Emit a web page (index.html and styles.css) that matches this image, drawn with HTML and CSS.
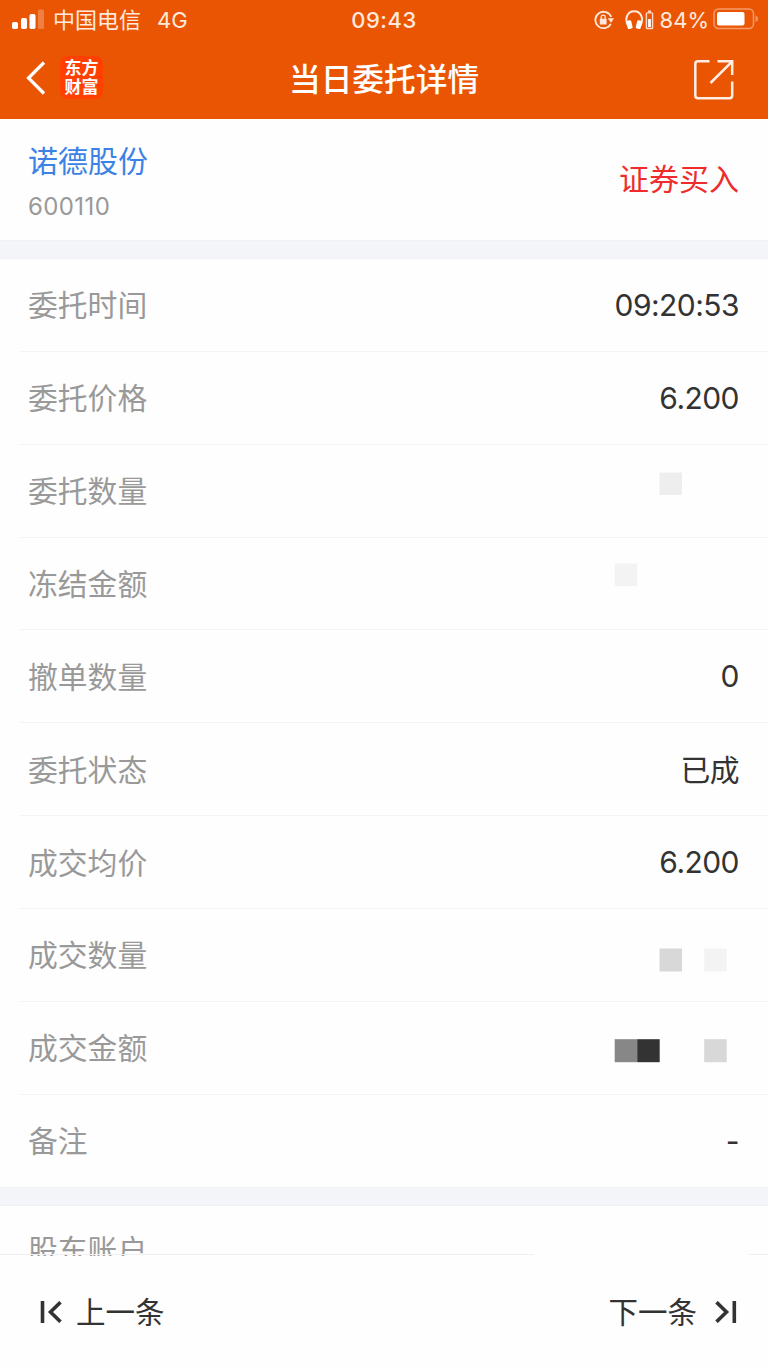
FILE: index.html
```html
<!DOCTYPE html>
<html lang="zh-CN">
<head>
<meta charset="utf-8">
<title>当日委托详情</title>
<link rel="stylesheet" href="styles.css">
</head>
<body>
<div class="screen">
  <header class="header">
    <div class="status">
      <div class="status-left">
        <svg class="signal" width="32" height="22" viewBox="0 0 32 22" fill="#fff"><rect x="0" y="14" width="6" height="7" rx="1.8"/><rect x="9" y="10" width="6" height="11" rx="1.8"/><rect x="17.500" y="6" width="6" height="15" rx="1.800"/><rect x="26" y="1.500" width="6" height="19.500" rx="1.500" opacity=".25"/></svg>
        <span class="carrier">中国电信</span>
        <span class="network">4G</span>
      </div>
      <span class="clock">09:43</span>
      <div class="status-right">
        <svg class="lock" width="20" height="20" viewBox="0 0 20 20" fill="none" stroke="#ffe9de" stroke-width="1.800"><path d="M16.800 13.800A8.200 8.200 0 1 1 17.200 7"/><path d="M13.800 8.200h6.200l-3 4.500z" fill="#ffe9de" stroke="none"/><rect x="5.800" y="8.800" width="6.800" height="5.700" rx=".6" fill="#ffe9de" stroke="none"/><path d="M7.200 9V7.200a2 2 0 0 1 4 0V9" stroke-width="1.300"/></svg>
        <svg class="phones" width="30" height="20" viewBox="0 0 30 20"><path d="M3.200 16C-1 8.500 2.500 1.200 9.200 1.200S19.400 8.500 15.200 16" fill="none" stroke="#ffe9de" stroke-width="2"/><rect x="2" y="10.500" width="5" height="8.500" rx="1.600" transform="rotate(-14 4.300 14.700)" fill="#fff"/><rect x="11.400" y="10.500" width="5" height="8.500" rx="1.600" transform="rotate(14 14.100 14.700)" fill="#fff"/><path d="M23 .5h3v2h-3z" fill="#ffd9c6"/><rect x="21.400" y="2.900" width="6.200" height="15.600" rx=".8" fill="none" stroke="#ffd9c6" stroke-width="1.400"/><path d="M23.100 9h2.800v8h-2.800z" fill="#fff"/></svg>
        <span class="percent">84%</span>
        <svg class="battery" width="46" height="22" viewBox="0 0 46 22"><rect x="1" y="1" width="39.500" height="19.500" rx="4.500" fill="none" stroke="#f39a6a" stroke-width="1.500"/><rect x="4" y="4" width="27.500" height="13.500" rx="2" fill="#fff"/><path d="M42.500 7.500q2.500 1 2.500 3.300t-2.500 3.300z" fill="#f39a6a"/></svg>
      </div>
    </div>
    <nav class="nav">
      <div class="nav-left">
        <svg class="back" width="20" height="34" viewBox="0 0 20 34" fill="none" stroke="#fff" stroke-width="3.200"><path d="M18 1.500 2.500 17 18 32.500"/></svg>
        <div class="logo">东方<br>财富</div>
      </div>
      <h1 class="title">当日委托详情</h1>
      <svg class="share" width="42" height="42" viewBox="0 0 42 42" fill="none" stroke="#ffeee5" stroke-width="2.500"><path d="M16.500 2.300H5Q2.300 2.300 2.300 5v31.500q0 2.700 2.700 2.700h31.500q2.700 0 2.700-2.700V22.500"/><path d="M24.500 2.300h14.700V16M39.200 2.300 17.500 24"/></svg>
    </nav>
  </header>

  <main class="content">
    <section class="summary">
      <div class="security">
        <div class="stock">诺德股份</div>
        <div class="code">600110</div>
      </div>
      <div class="side">证券买入</div>
    </section>
    <div class="gap"></div>
    <section class="rows">
      <div class="row"><span class="label">委托时间</span><span class="value">09:20:53</span></div>
      <div class="row"><span class="label">委托价格</span><span class="value">6.200</span></div>
      <div class="row"><span class="label">委托数量</span><svg class="mosaic" viewBox="0 0 126 92"><rect x="45.500" y="27.500" width="22.500" height="22.500" fill="#eee"/></svg></div>
      <div class="row"><span class="label">冻结金额</span><svg class="mosaic" viewBox="0 0 126 92"><rect x="0.700" y="25.500" width="22.500" height="22.500" fill="#f3f3f3"/></svg></div>
      <div class="row"><span class="label">撤单数量</span><span class="value">0</span></div>
      <div class="row"><span class="label">委托状态</span><span class="value label">已成</span></div>
      <div class="row"><span class="label">成交均价</span><span class="value">6.200</span></div>
      <div class="row"><span class="label">成交数量</span><svg class="mosaic" viewBox="0 0 126 92"><rect x="45.500" y="39.500" width="22.500" height="23" fill="#d8d8d8"/><rect x="90.200" y="39.500" width="22.500" height="23" fill="#f3f3f3"/></svg></div>
      <div class="row"><span class="label">成交金额</span><svg class="mosaic" viewBox="0 0 126 92"><rect x="0.700" y="37.200" width="22.500" height="23" fill="#878787"/><rect x="23.200" y="37.200" width="22.500" height="23" fill="#333"/><rect x="90.200" y="37.200" width="22.500" height="23" fill="#d8d8d8"/></svg></div>
      <div class="row"><span class="label">备注</span><span class="value">-</span></div>
    </section>
    <div class="gap"></div>
    <section class="rows account">
      <div class="row"><span class="label">股东账户</span></div>
    </section>
  </main>
  <div class="footer-line"><i></i><i></i></div>

  <footer class="footer">
    <div class="pager">
      <svg width="22" height="22" viewBox="0 0 22 22" fill="none" stroke="#333" stroke-width="3.600"><path d="M2.500 0v22M20.500 1.200 10.500 11l10 9.800"/></svg>
      <span class="label">上一条</span>
    </div>
    <div class="pager next">
      <span class="label">下一条</span>
      <svg width="22" height="22" viewBox="0 0 22 22" fill="none" stroke="#333" stroke-width="3.600"><path d="M19.300 0v22M1.500 1.200 11.500 11l-10 9.800"/></svg>
    </div>
  </footer>
</div>
</body>
</html>
```
FILE: styles.css
```css
* { box-sizing: border-box; }
body {
  margin: 0;
  background: #fefefe;
  font-family: Inter, "Noto Sans CJK SC", sans-serif;
}
svg { display: block; flex: none; }
.screen {
  display: flex;
  flex-direction: column;
  width: 768px;
  height: 1367px;
  overflow: hidden;
}
.header {
  flex: none;
  height: 119px;
  background: #ea5504;
  color: #fff;
}
.status, .nav {
  display: grid;
  grid-template-columns: 1fr auto 1fr;
  align-items: center;
}
.status {
  height: 40px;
  padding: 0 12px;
  font-size: 22px;
  line-height: 40px;
  color: #ffe9de;
}
.status-left, .status-right, .nav-left {
  display: flex;
  align-items: center;
}
.signal { margin-bottom: 3px; }
.carrier { margin-left: 9px; }
.network { margin-left: 16px; }
.clock {
  font-weight: 500;
  letter-spacing: .5px;
}
.status-right { justify-content: flex-end; }
.phones { margin-left: 11px; }
.percent { margin-left: 5px; letter-spacing: 0; }
.battery { margin: 0 -3px 2px 4px; }
.nav {
  height: 79px;
  padding: 0 33px 0 26px;
}
.back { margin-bottom: 4px; }
.logo {
  width: 43px;
  height: 43px;
  padding-top: 2px;
  margin: 0 0 4px 14px;
  border-radius: 8px;
  background: #ff4000;
  font-family: "Noto Sans CJK SC", sans-serif;
  font-size: 17px;
  font-weight: 700;
  line-height: 18.500px;
  text-align: center;
}
.title {
  margin: 0;
  padding-left: 7px;
  font-size: 31.700px;
  font-weight: 500;
  line-height: 79px;
}
.share { justify-self: end; }
.content {
  flex: 1;
  min-height: 0;
  overflow: hidden;
}
.summary {
  display: flex;
  justify-content: space-between;
  align-items: center;
  height: 121px;
  padding: 0 29px 0 28px;
  font-size: 30px;
}
.security { padding-top: 8px; }
.stock { line-height: 46px; color: #3c82e6; }
.code {
  font-size: 24px;
  line-height: 46px;
  letter-spacing: .4px;
  color: #999;
}
.side { padding-bottom: 5px; color: #f02b2b; }
.gap {
  height: 19px;
  background: #f4f5f9;
  border: 1px solid #f0f1f4;
  border-width: 1px 0;
}
.rows { padding-left: 19px; }
.row {
  display: flex;
  justify-content: space-between;
  align-items: center;
  height: 92.860px;
  padding: 0 28px 0 9px;
  border-bottom: 1px solid #f4f4f5;
  font-size: 30px;
  color: #999;
}
.label {
  padding-bottom: 3px;
  font-size: 29.800px;
}
.rows .row:last-child { height: 92.260px; border-bottom: 0; }
.account .label { padding-bottom: 9px; }
.row .value { color: #333; letter-spacing: -.55px; margin-right: 1px; }
.mosaic { width: 126px; height: 92px; }
.footer-line {
  display: flex;
  flex: none;
  justify-content: space-between;
  height: 1px;
  margin-top: -2px;
}
.footer-line i { width: 534px; background: #f0f0f0; }
.footer-line i + i { width: 19px; }
.footer {
  display: flex;
  flex: none;
  justify-content: space-between;
  height: 111px;
  padding: 0 31px 0 40px;
  margin-top: 1px;
  font-size: 30px;
  color: #333;
}
.footer .label { font-size: 29.500px; }
.pager {
  display: flex;
  align-items: center;
  gap: 14px;
}
.next { gap: 18px; }
```
